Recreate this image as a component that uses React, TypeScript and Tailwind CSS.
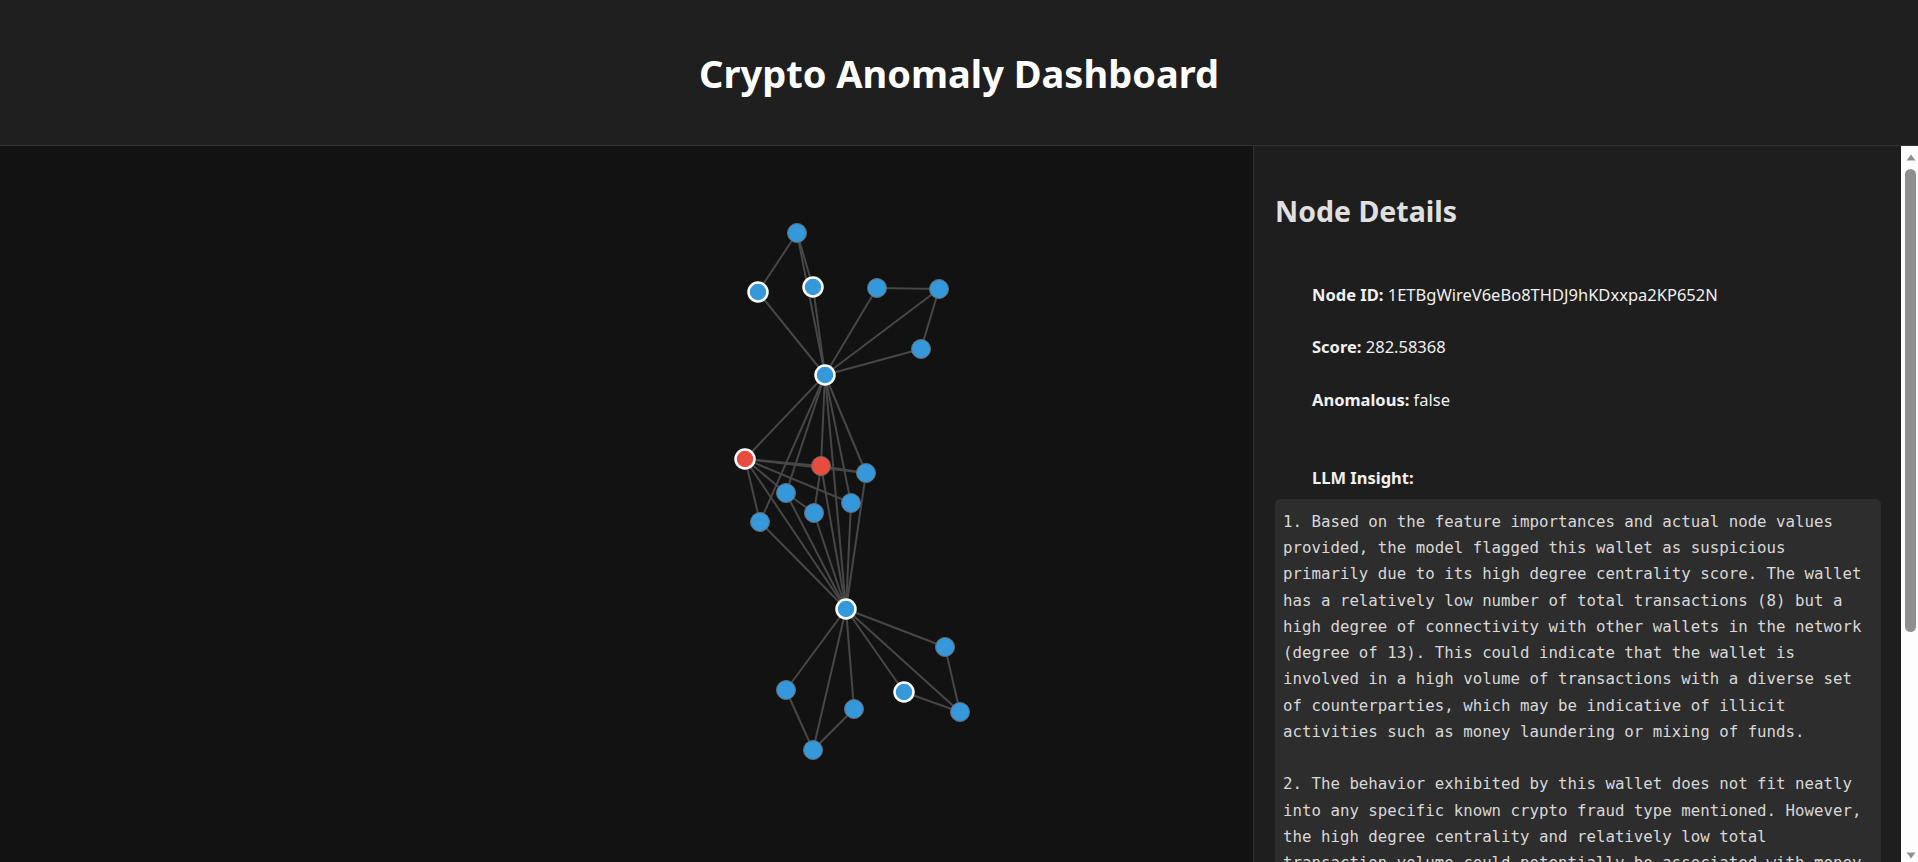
import React from 'react';

type Node = { id: string; x: number; y: number; kind: 'normal' | 'anomaly'; ring?: boolean };

// page coordinates; the svg viewBox starts at the top of the graph area
const nodes: Node[] = [
  { id: 'A', x: 797, y: 233, kind: 'normal' },
  { id: 'B', x: 758, y: 292, kind: 'normal', ring: true },
  { id: 'C', x: 813, y: 287, kind: 'normal', ring: true },
  { id: 'D', x: 877, y: 288, kind: 'normal' },
  { id: 'E', x: 939, y: 289, kind: 'normal' },
  { id: 'F', x: 921, y: 349, kind: 'normal' },
  { id: 'H1', x: 825, y: 375, kind: 'normal', ring: true },
  { id: 'R1', x: 745, y: 459, kind: 'anomaly', ring: true },
  { id: 'R2', x: 821, y: 466, kind: 'anomaly' },
  { id: 'G', x: 866, y: 473, kind: 'normal' },
  { id: 'H', x: 786, y: 493, kind: 'normal' },
  { id: 'I', x: 851, y: 503, kind: 'normal' },
  { id: 'J', x: 814, y: 513, kind: 'normal' },
  { id: 'K', x: 760, y: 522, kind: 'normal' },
  { id: 'H2', x: 846, y: 609, kind: 'normal', ring: true },
  { id: 'L', x: 945, y: 647, kind: 'normal' },
  { id: 'M', x: 786, y: 690, kind: 'normal' },
  { id: 'N', x: 854, y: 709, kind: 'normal' },
  { id: 'O', x: 904, y: 692, kind: 'normal', ring: true },
  { id: 'P', x: 960, y: 712, kind: 'normal' },
  { id: 'Q', x: 813, y: 750, kind: 'normal' },
];

const links: [string, string][] = [
  ['A', 'B'], ['A', 'C'], ['A', 'H1'], ['C', 'H1'], ['B', 'H1'],
  ['D', 'E'], ['D', 'H1'], ['E', 'H1'], ['E', 'F'], ['F', 'H1'],
  ['H1', 'R1'], ['H1', 'R2'], ['H1', 'K'], ['H1', 'H'], ['H1', 'G'], ['H1', 'I'], ['H1', 'H2'],
  ['R1', 'R2'], ['R1', 'G'], ['R1', 'I'], ['R1', 'H'], ['R1', 'K'], ['R1', 'H2'],
  ['R2', 'G'], ['R2', 'J'], ['R2', 'H2'],
  ['H', 'J'], ['H', 'H2'], ['J', 'H2'], ['K', 'H2'], ['I', 'H2'], ['G', 'H2'],
  ['H2', 'M'], ['H2', 'Q'], ['H2', 'N'], ['H2', 'O'], ['H2', 'P'], ['H2', 'L'],
  ['L', 'P'], ['O', 'P'], ['M', 'Q'], ['N', 'Q'],
];

const byId = Object.fromEntries(nodes.map(n => [n.id, n]));

const insight = `1. Based on the feature importances and actual node values provided, the model flagged this wallet as suspicious primarily due to its high degree centrality score. The wallet has a relatively low number of total transactions (8) but a high degree of connectivity with other wallets in the network (degree of 13). This could indicate that the wallet is involved in a high volume of transactions with a diverse set of counterparties, which may be indicative of illicit activities such as money laundering or mixing of funds.

2. The behavior exhibited by this wallet does not fit neatly into any specific known crypto fraud type mentioned. However, the high degree centrality and relatively low total transaction volume could potentially be associated with money laundering schemes, where funds are split across many intermediary wallets in small amounts to obscure their origin.

3. To investigate further, an analyst should trace the flow of funds to and from its counterparties, check whether any connected wallets appear on known sanctions or exchange blacklists, and review the timing of its transactions for bursts of activity that could point to automated mixing or peel chain behavior.`;

function Graph() {
  return (
    <svg className="block h-full w-full" viewBox="0 146 1253 716" preserveAspectRatio="xMinYMin meet">
      <g stroke="#474747" strokeWidth={2}>
        {links.map(([s, t]) => (
          <line key={`${s}-${t}`} x1={byId[s].x} y1={byId[s].y} x2={byId[t].x} y2={byId[t].y} />
        ))}
      </g>
      {nodes.map(n => (
        <circle
          key={n.id}
          cx={n.x}
          cy={n.y}
          r={9.5}
          fill={n.kind === 'anomaly' ? '#e74c3c' : '#3498db'}
          stroke={n.ring ? '#ffffff' : '#6b6b6b'}
          strokeWidth={n.ring ? 2.5 : 1}
        />
      ))}
    </svg>
  );
}

function Field({ label, value }: { label: string; value: string }) {
  return (
    <div className="h-[32.5px] text-[16.5px] leading-[32.5px] text-[#f0f0f0]">
      <span className="font-bold">{label}</span> {value}
    </div>
  );
}

// the page's scrollbar, drawn since the headless browser hides native ones
function ScrollBar() {
  return (
    <div className="flex w-[17px] flex-none flex-col bg-[#fdfdfd]">
      <div className="flex h-[22px] flex-none items-center justify-center pl-[2px]">
        <svg width="10" height="7" viewBox="0 0 10 7">
          <path d="M5 0.5 L9.5 6.5 L0.5 6.5 Z" fill="#8f8f8f" />
        </svg>
      </div>
      <div className="min-h-0 flex-1 pl-[4px] pr-[2px] pt-[1px]">
        <div className="h-[463px] w-full rounded-full bg-[#8f8f8f]" />
      </div>
      <div className="flex h-[14px] flex-none items-center justify-center pl-[2px]">
        <svg width="10" height="7" viewBox="0 0 10 7">
          <path d="M0.5 0.5 L9.5 0.5 L5 6.5 Z" fill="#8f8f8f" />
        </svg>
      </div>
    </div>
  );
}

export default function App() {
  return (
    <div className="flex h-screen flex-col overflow-hidden bg-[#121212] font-['Noto_Sans',sans-serif]">
      <header className="flex h-[146px] flex-none items-center justify-center border-b border-[#333] bg-[#1f1f1f] pt-[2px]">
        <h1 className="text-[38px] font-bold text-white">Crypto Anomaly Dashboard</h1>
      </header>

      <main className="flex min-h-0 flex-1">
        <div className="min-w-0 flex-1 bg-[#121212]">
          <Graph />
        </div>

        <aside className="flex w-[665px] flex-none border-l border-[#333] bg-[#1e1e1e]">
          <div className="min-w-0 flex-1 overflow-hidden pl-[21px] pt-[20px] pb-[20px]">
            <h2 className="mt-[25px] text-[28.5px] font-bold leading-[40px] text-[#e0e0e0]">Node Details</h2>

            <div className="mt-[47.75px] flex flex-col gap-[20px] pl-[37px]">
              <Field label="Node ID:" value="1ETBgWireV6eBo8THDJ9hKDxxpa2KP652N" />
              <Field label="Score:" value="282.58368" />
              <Field label="Anomalous:" value="false" />
            </div>

            <div className="mt-[48px] pl-[37px] text-[16.5px] font-bold leading-[27px] text-[#f0f0f0]">LLM Insight:</div>

            <pre className="mt-[7.5px] w-[606px] whitespace-pre-wrap rounded-[5px] bg-[#2d2d2d] px-[8px] pt-[10px] pb-[8px] font-['DejaVu_Sans_Mono',monospace] text-[15.75px] leading-[26.25px] text-[#d8d8d8]">
              {insight}
            </pre>
          </div>
          <ScrollBar />
        </aside>
      </main>
    </div>
  );
}
